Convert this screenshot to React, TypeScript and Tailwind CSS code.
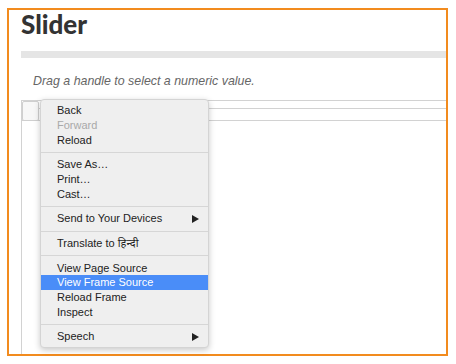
const menu: (string | { label: string; disabled?: boolean; active?: boolean; sub?: boolean })[][] = [
  ["Back", { label: "Forward", disabled: true }, "Reload"],
  ["Save As…", "Print…", "Cast…"],
  [{ label: "Send to Your Devices", sub: true }],
  ["Translate to हिन्दी"],
  ["View Page Source", { label: "View Frame Source", active: true }, "Reload Frame", "Inspect"],
  [{ label: "Speech", sub: true }],
];

function ContextMenu() {
  return (
    <div className="absolute left-[31px] top-[89px] w-[169px] rounded-[4px] border border-[#d4d4d4] bg-[#efefef] pt-[3.5px] pb-[3px] shadow-[0_2px_6px_rgba(0,0,0,0.22)] text-[11px] text-[#222] [font-family:'Liberation_Sans','Noto_Sans',sans-serif]">
      {menu.map((group, gi) => (
        <div key={gi}>
          {gi > 0 && (
            <div className="flex h-[10px] items-center">
              <div className="h-px w-full bg-[#d6d6d6]" />
            </div>
          )}
          {group.map((it) => {
            const item = typeof it === "string" ? { label: it } : it;
            return (
              <div
                key={item.label}
                className={
                  "flex h-[14.67px] items-center justify-between pl-[16px] pr-[9px] leading-none " +
                  (item.active ? "bg-[#4a8df8] text-white " : "") +
                  (item.disabled ? "text-[#a9a9a9]" : "")
                }
              >
                <span>{item.label}</span>
                {item.sub && (
                  <svg width="7" height="8" viewBox="0 0 7 8">
                    <path d="M0 0 L7 4 L0 8 Z" fill="#222" />
                  </svg>
                )}
              </div>
            );
          })}
        </div>
      ))}
    </div>
  );
}

export default function App() {
  return (
    <div className="h-[364px] w-[456px] bg-white pl-[7px] pt-[8px]">
      <div className="relative flex h-[348px] w-[441px] flex-col border-2 border-[#f28b1e] pl-[12px] pt-px">
        <h1 className="text-[26px] font-black leading-[26px] text-[#333] [font-family:Lato,sans-serif]">
          Slider
        </h1>
        <div className="mt-[13.5px] h-[7px] bg-[#e5e5e5]" />
        <p className="mt-[15px] pl-[12px] text-[12.4px] italic leading-[16px] text-[#666] [font-family:'Liberation_Sans',sans-serif]">
          Drag a handle to select a numeric value.
        </p>
        <div className="relative mt-[11px] flex-1 border-l border-t border-[#d2d2d2]">
          <div className="h-[8px] border-b border-[#d2d2d2]" />
          <div className="h-[12px] border-b border-[#d2d2d2]" />
          <div className="absolute left-0 top-0 h-[20px] w-[17px] rounded-[2px] border border-[#cfcfcf] bg-[#f7f7f7]" />
        </div>
        <ContextMenu />
      </div>
    </div>
  );
}
